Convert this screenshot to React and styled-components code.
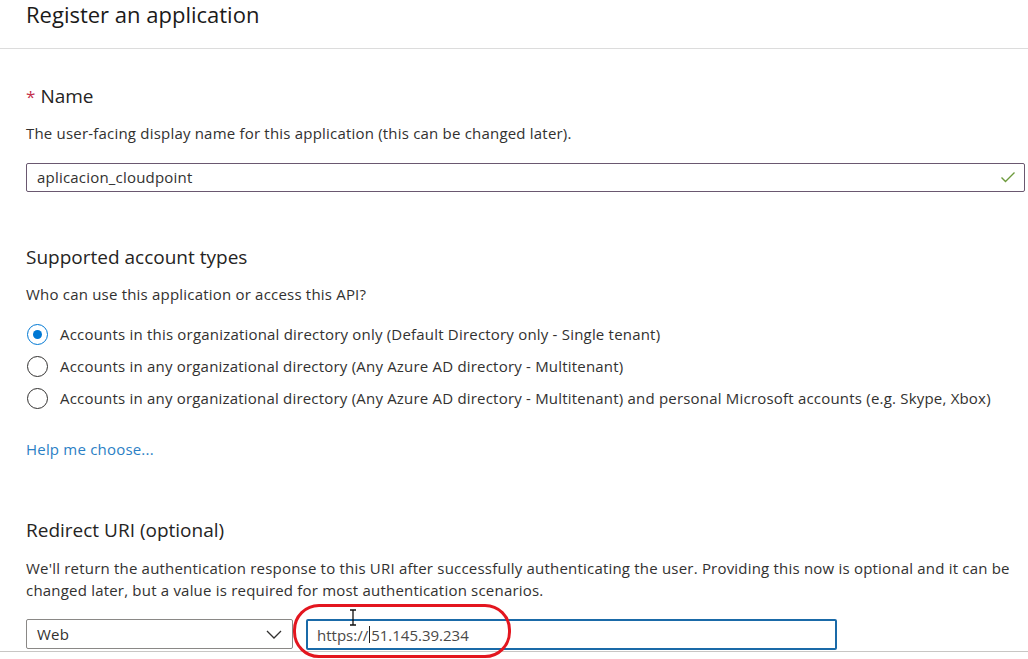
import React from "react";
import styled, { createGlobalStyle } from "styled-components";

const Global = createGlobalStyle`
  html, body { margin: 0; padding: 0; background: #fff; }
  body { font-family: "Open Sans", "Noto Sans", sans-serif; color: #323130; }
  * { box-sizing: border-box; }
`;

const Page = styled.div`
  width: 1028px;
  height: 659px;
  overflow: hidden;
  position: relative;
  background: #fff;
`;

const Header = styled.header`
  height: 49px;
  border-bottom: 1px solid #dcdcdc;
  padding-left: 26px;
`;

const Title = styled.h1`
  margin: 0;
  font-size: 22px;
  font-weight: 400;
  line-height: 28px;
  color: #1b1a19;
`;

const Form = styled.div`
  padding: 0 3px 1px 26px;
`;

const SectionTitle = styled.h2`
  margin: ${(p) => p.$top}px 0 0;
  font-size: 19px;
  font-weight: 400;
  line-height: 24px;
  color: #252423;
`;

const Required = styled.span`
  color: #c4314b;
  font-size: 17px;
  margin-right: 5px;
`;

const Text = styled.p`
  margin: ${(p) => p.$top}px 0 0;
  font-size: 15px;
  letter-spacing: 0.2px;
  line-height: ${(p) => p.$lh || 20}px;
  color: #323130;
  white-space: nowrap;
`;

const TextField = styled.div`
  margin-top: 20px;
  height: 29px;
  border: 1px solid #6a5870;
  border-radius: 2px;
  display: flex;
  align-items: center;
  justify-content: space-between;
  padding: 0 8px 2px 10px;
  font-size: 15px;
  letter-spacing: 0.2px;
  color: #323130;
`;

const RadioList = styled.div`
  margin-top: 14px;
  display: flex;
  flex-direction: column;
`;

const RadioRow = styled.label`
  height: 32px;
  display: flex;
  align-items: center;
  gap: 12px;
  font-size: 15px;
  letter-spacing: 0.2px;
  color: #323130;
  white-space: nowrap;
`;

const RadioCircle = styled.span`
  width: 21px;
  height: 21px;
  border-radius: 50%;
  border: 1px solid ${(p) => (p.$checked ? "#0078d4" : "#323130")};
  display: flex;
  align-items: center;
  justify-content: center;
  flex: none;
  margin-left: 1px;
  margin-top: 1px;
  &::after {
    content: "";
    width: 9px;
    height: 9px;
    border-radius: 50%;
    background: ${(p) => (p.$checked ? "#0078d4" : "transparent")};
  }
`;

const Link = styled.a`
  display: block;
  margin-top: 25px;
  font-size: 15px;
  letter-spacing: 0.2px;
  line-height: 20px;
  color: #2b80c5;
  text-decoration: none;
`;

const UriRow = styled.div`
  margin-top: 18px;
  display: flex;
  gap: 13px;
  position: relative;
`;

const Select = styled.div`
  width: 267px;
  height: 30px;
  border: 1px solid #8a8886;
  border-radius: 2px;
  display: flex;
  align-items: center;
  justify-content: space-between;
  padding: 0 10px 0 10px;
  font-size: 15px;
  letter-spacing: 0.2px;
  color: #323130;
`;

const UriInput = styled.div`
  width: 531px;
  height: 31px;
  border: 2px solid #1a6aa8;
  border-radius: 2px;
  display: flex;
  align-items: center;
  padding-left: 9px;
  font-size: 15px;
  color: #4a4948;
`;

const Caret = styled.span`
  display: inline-block;
  width: 1px;
  height: 17px;
  background: #201f1e;
  margin: 0 1px;
`;

const Highlight = styled.div`
  position: absolute;
  left: 267px;
  top: -15px;
  width: 218px;
  height: 54px;
  border: 3px solid #e3161f;
  border-radius: 26px;
  pointer-events: none;
`;

const IBeam = styled.svg`
  position: absolute;
  left: 323px;
  top: -10px;
`;

const Divider = styled.div`
  height: 1px;
  background: #c8c6c4;
`;

const Check = () => (
  <svg width="16" height="12" viewBox="0 0 16 12">
    <path d="M1.5 6.5 L5.5 10.5 L14.5 1.5" fill="none" stroke="#6d9a3c" strokeWidth="1.4" />
  </svg>
);

const Chevron = () => (
  <svg width="16" height="9" viewBox="0 0 16 9">
    <path d="M1 1 L8 8 L15 1" fill="none" stroke="#323130" strokeWidth="1.3" />
  </svg>
);

const radios = [
  { label: "Accounts in this organizational directory only (Default Directory only - Single tenant)", checked: true },
  { label: "Accounts in any organizational directory (Any Azure AD directory - Multitenant)" },
  { label: "Accounts in any organizational directory (Any Azure AD directory - Multitenant) and personal Microsoft accounts (e.g. Skype, Xbox)" },
];

export default function App() {
  return (
    <Page>
      <Global />
      <Header>
        <Title>Register an application</Title>
      </Header>
      <Form>
        <SectionTitle $top={35}>
          <Required>*</Required>Name
        </SectionTitle>
        <Text $top={14}>The user-facing display name for this application (this can be changed later).</Text>
        <TextField>
          <span>aplicacion_cloudpoint</span>
          <Check />
        </TextField>

        <SectionTitle $top={53}>Supported account types</SectionTitle>
        <Text $top={15}>Who can use this application or access this API?</Text>
        <RadioList>
          {radios.map((r) => (
            <RadioRow key={r.label}>
              <RadioCircle $checked={r.checked} />
              {r.label}
            </RadioRow>
          ))}
        </RadioList>
        <Link href="#">Help me choose...</Link>

        <SectionTitle $top={59}>Redirect URI (optional)</SectionTitle>
        <Text $top={15} $lh={22}>
          We'll return the authentication response to this URI after successfully authenticating the user. Providing this now is optional and it can be
          <br />
          changed later, but a value is required for most authentication scenarios.
        </Text>
        <UriRow>
          <Select>
            <span>Web</span>
            <Chevron />
          </Select>
          <UriInput>
            https://<Caret />51.145.39.234
          </UriInput>
          <Highlight />
          <IBeam width="8" height="17" viewBox="0 0 8 17">
            <path d="M1 1 H7 M4 1 V16 M1 16 H7" fill="none" stroke="#111" strokeWidth="1.3" />
          </IBeam>
        </UriRow>
      </Form>
      <Divider />
    </Page>
  );
}
